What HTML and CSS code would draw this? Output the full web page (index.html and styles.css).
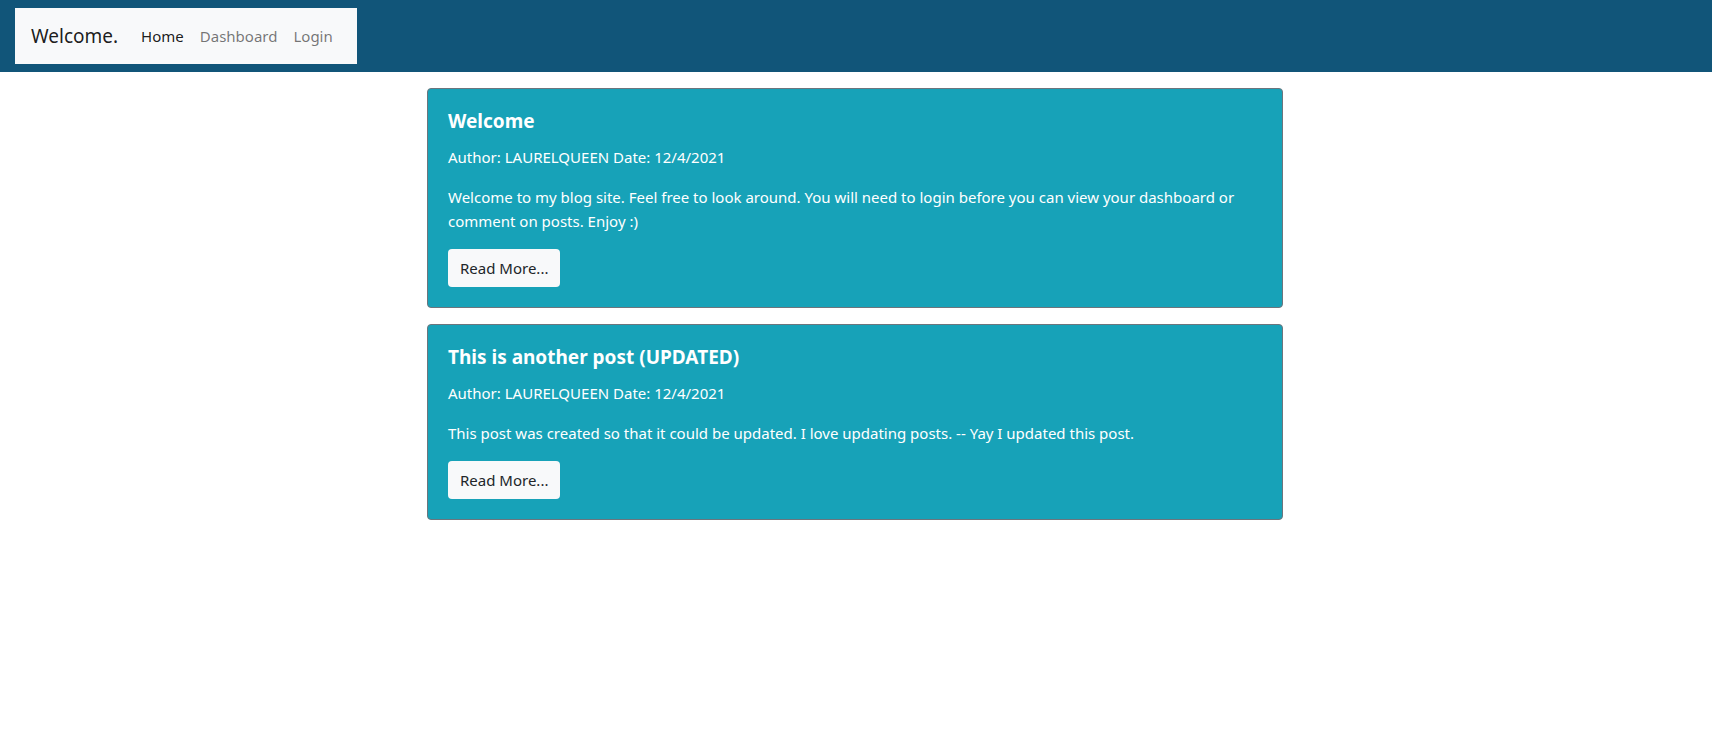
FILE: index.html
```html
<!DOCTYPE html>
<html lang="en">
<head>
<meta charset="utf-8">
<title>Welcome.</title>
<link rel="stylesheet" href="styles.css">
</head>
<body>
<header class="site-header">
  <nav class="navbar">
    <a class="brand" href="#">Welcome.</a>
    <ul class="nav-links">
      <li><a class="nav-link active" href="#">Home</a></li>
      <li><a class="nav-link" href="#">Dashboard</a></li>
      <li><a class="nav-link" href="#">Login</a></li>
    </ul>
  </nav>
</header>
<div class="page">
  <main class="posts">
    <article class="card">
      <h5 class="card-title">Welcome</h5>
      <p class="card-meta">Author: LAURELQUEEN Date: 12/4/2021</p>
      <p class="card-text">Welcome to my blog site. Feel free to look around. You will need to login before you can view your dashboard or comment on posts. Enjoy :)</p>
      <a class="btn" href="#">Read More...</a>
    </article>
    <article class="card">
      <h5 class="card-title">This is another post (UPDATED)</h5>
      <p class="card-meta">Author: LAURELQUEEN Date: 12/4/2021</p>
      <p class="card-text">This post was created so that it could be updated. I love updating posts. -- Yay I updated this post.</p>
      <a class="btn" href="#">Read More...</a>
    </article>
  </main>
</div>
</body>
</html>
```
FILE: styles.css
```css
* { box-sizing: border-box; }
html, body { margin: 0; padding: 0; }
body {
  font-family: "Noto Sans", "Open Sans", sans-serif;
  font-size: 15px;
  line-height: 24px;
  color: #212529;
  background: #fff;
}
.site-header {
  background: #115579;
  height: 72px;
  padding: 8px 15px;
  display: flex;
}
.navbar {
  background: #f8f9fa;
  display: flex;
  align-items: center;
  padding: 8px 16px;
  height: 56px;
}
.brand {
  font-size: 19px;
  color: rgba(0,0,0,.9);
  text-decoration: none;
  margin-right: 15px;
  line-height: 30px;
}
.nav-links {
  list-style: none;
  margin: 0;
  padding: 0;
  display: flex;
}
.nav-link {
  display: block;
  padding: 8px;
  color: rgba(0,0,0,.55);
  text-decoration: none;
}
.nav-link.active { color: rgba(0,0,0,.9); }
.page {
  padding-right: 2px;
}
.posts {
  width: 856px;
  margin: 16px auto 0;
  display: flex;
  flex-direction: column;
  gap: 16px;
}
.card {
  background: #17a2b8;
  border: 1px solid #6c757d;
  border-radius: 4px;
  padding: 20px;
  color: #fff;
}
.card-title {
  margin: 0 0 12px;
  font-size: 19px;
  font-weight: 700;
  line-height: 24px;
}
.card-meta, .card-text {
  margin: 0 0 16px;
}
.btn {
  display: inline-block;
  background: #f8f9fa;
  color: #212529;
  text-decoration: none;
  border-radius: 4px;
  padding: 7px 12px;
  line-height: 24px;
  border: 0;
  height: 38px;
}
```
